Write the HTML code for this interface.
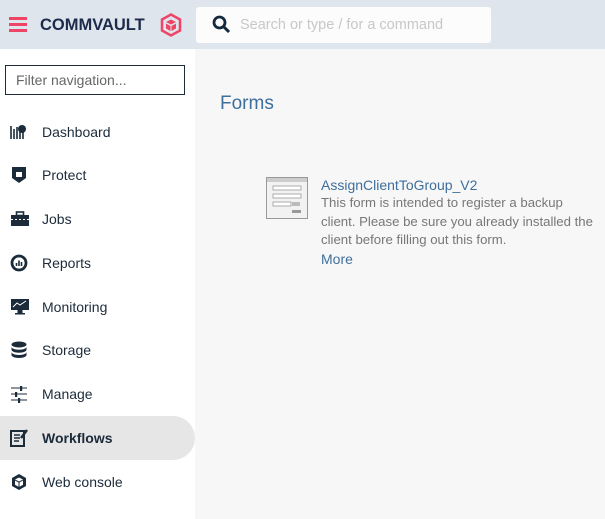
<!DOCTYPE html><html><head><style>
body{margin:0;width:605px;height:519px;overflow:hidden;font-family:"Liberation Sans",sans-serif;background:#f7f7f7;position:relative}
.hdr{position:absolute;left:0;top:0;width:605px;height:49px;background:#dfe5ec}
.side{position:absolute;left:0;top:49px;width:195px;height:470px;background:#fff}
.nav{position:absolute;left:0;width:195px;height:44px;font-size:14px;color:#1c2b3a}
.nav span{position:absolute;left:42px;top:14px}
.nav svg{position:absolute;left:10px;top:13px}
</style></head><body>
<div class="hdr">
<div style="position:absolute;left:9px;top:17px;width:18px;height:3px;background:#ee4466;box-shadow:0 6px 0 #ee4466,0 12px 0 #ee4466"></div>
<div style="position:absolute;left:40px;top:15px;font-size:17px;font-weight:bold;color:#1d2b4b;letter-spacing:0px;transform:scaleX(0.97);transform-origin:left">COMMVAULT</div>
<svg style="position:absolute;left:160px;top:13px" width="22" height="24" viewBox="0 0 22 24"><path d="M11 1.5L20 6.5V17.5L11 22.5L2 17.5V6.5Z" fill="none" stroke="#ee4466" stroke-width="2.5"/><path d="M6 9L11 6.5 16 9 11 11.5Z M6 10.5L10.5 13V18L6 15.5Z M11.5 13L16 10.5V15.5L11.5 18Z" fill="#ee4466"/></svg>
<div style="position:absolute;left:196px;top:7px;width:295px;height:36px;background:#fcfcfc;border-radius:3px">
<svg style="position:absolute;left:16px;top:8px" width="19" height="19" viewBox="0 0 19 19"><circle cx="7.5" cy="7.5" r="5.5" fill="none" stroke="#13293d" stroke-width="2.8"/><path d="M11.5 11.5L17 17" stroke="#13293d" stroke-width="3"/></svg>
<div style="position:absolute;left:44px;top:10px;font-size:14.5px;color:#c8c8c8">Search or type / for a command</div></div>
</div>
<div class="side">
<div style="position:absolute;left:5px;top:16px;width:178px;height:28px;border:1.5px solid #1d2b3a;font-size:14px;color:#666"><span style="position:absolute;left:10px;top:6px">Filter navigation...</span></div>
</div>
<div class="nav" style="top:110px"><svg width="18" height="18"><path d="M1 3v13M4 6v10M7 4v12M10 9v7M13 9v7" stroke="#1c2b3a" stroke-width="1.6"/><circle cx="12" cy="6" r="4" fill="#1c2b3a"/></svg><span>Dashboard</span></div>
<div class="nav" style="top:153px"><svg width="18" height="18"><path d="M2 1h14v11l-7 5-7-5z" fill="#1c2b3a"/><rect x="6" y="6" width="6" height="5" fill="#fff"/></svg><span>Protect</span></div>
<div class="nav" style="top:197px"><svg width="20" height="18"><rect x="1" y="5" width="18" height="11" fill="#1c2b3a"/><rect x="6.5" y="2" width="7" height="3.5" fill="none" stroke="#1c2b3a" stroke-width="1.6"/><path d="M1 9.5h18" stroke="#fff" stroke-dasharray="2 2"/></svg><span>Jobs</span></div>
<div class="nav" style="top:241px"><svg width="20" height="18"><circle cx="9" cy="9" r="7" fill="none" stroke="#1c2b3a" stroke-width="2.8"/><path d="M6.5 12V9M9 12V6.5M11.5 12V8" stroke="#1c2b3a" stroke-width="1.6"/></svg><span>Reports</span></div>
<div class="nav" style="top:285px"><svg width="20" height="18"><rect x="1" y="1" width="18" height="11" fill="#1c2b3a"/><path d="M3 9l4-4 3 2 6-4" stroke="#fff" fill="none"/><rect x="7.5" y="12" width="5" height="3" fill="#1c2b3a"/><rect x="5" y="15" width="10" height="1.5" fill="#1c2b3a"/></svg><span>Monitoring</span></div>
<div class="nav" style="top:328px"><svg width="18" height="18"><ellipse cx="9" cy="3.5" rx="7.5" ry="3" fill="#1c2b3a"/><path d="M1.5 5.8v3c0 1.6 3.3 3 7.5 3s7.5-1.4 7.5-3v-3c0 1.6-3.3 3-7.5 3S1.5 7.4 1.5 5.8zM1.5 11v3c0 1.6 3.3 3 7.5 3s7.5-1.4 7.5-3v-3c0 1.6-3.3 3-7.5 3S1.5 12.6 1.5 11z" fill="#1c2b3a"/></svg><span>Storage</span></div>
<div class="nav" style="top:372px"><svg width="18" height="18"><path d="M1 3h16M1 9h16M1 15h16" stroke="#1c2b3a"/><rect x="10" y="1" width="2.2" height="5" fill="#1c2b3a"/><rect x="5" y="7" width="2.2" height="5" fill="#1c2b3a"/><rect x="8" y="13" width="2.2" height="5" fill="#1c2b3a"/></svg><span>Manage</span></div>
<div class="nav" style="top:416px;background:#e6e6e6;border-radius:0 22px 22px 0"><svg width="18" height="18"><rect x="1" y="2" width="13" height="15" fill="none" stroke="#1c2b3a" stroke-width="2"/><path d="M4 6h6M4 9h6M4 12h5" stroke="#1c2b3a" stroke-width="1.6"/><path d="M17 1l-6 8" stroke="#1c2b3a" stroke-width="2.4"/></svg><span style="font-weight:bold">Workflows</span></div>
<div class="nav" style="top:460px"><svg width="18" height="18"><path d="M9 1l7 4v8l-7 4-7-4V5z" fill="#1c2b3a"/><path d="M5 6.5L9 4.5l4 2L9 8.5z M5 7.5l3.5 2v4.3L5 11.8z M9.5 9.5l3.5-2v4.3l-3.5 2z" fill="#fff"/></svg><span>Web console</span></div>
<div style="position:absolute;left:220px;top:93px;font-size:19px;color:#3e6f9c">Forms</div>
<svg style="position:absolute;left:266px;top:177px" width="42" height="42"><rect x="0.5" y="0.5" width="41" height="41" fill="#f2f2f2" stroke="#999"/><rect x="1" y="1" width="40" height="4" fill="#ccc"/><rect x="7" y="9" width="28" height="4" fill="#fff" stroke="#999" stroke-width=".8"/><rect x="7" y="17" width="28" height="4" fill="#fff" stroke="#999" stroke-width=".8"/><rect x="7" y="25" width="18" height="4" fill="#fff" stroke="#999" stroke-width=".8"/><rect x="26" y="25" width="8" height="4" fill="#bbb"/><rect x="26" y="33" width="9" height="3" fill="#999"/></svg>
<div style="position:absolute;left:321px;top:177px;font-size:14px;color:#3e6f9c">AssignClientToGroup_V2</div>
<div style="position:absolute;left:321px;top:194px;white-space:nowrap;font-size:13.2px;line-height:18.5px;color:#777">This form is intended to register a backup<br>client. Please be sure you already installed the<br>client before filling out this form.</div>
<div style="position:absolute;left:321px;top:251px;font-size:14px;color:#3e6f9c">More</div>
</body></html>
